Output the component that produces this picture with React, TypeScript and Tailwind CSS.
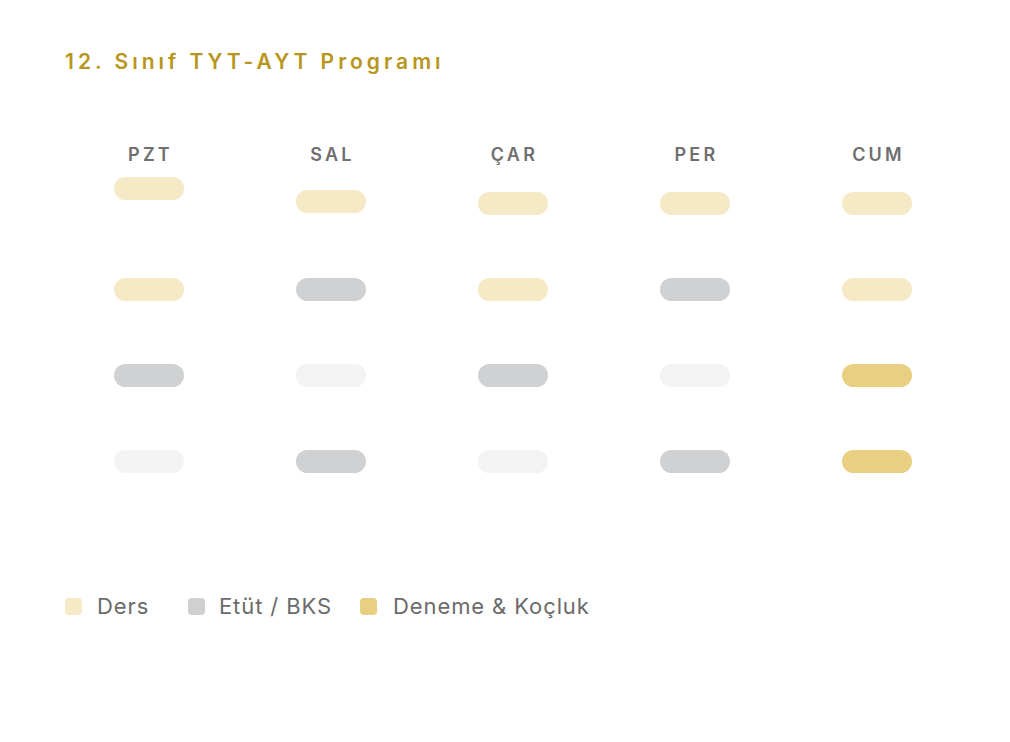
import React from "react";

type Kind = "c" | "g" | "l" | "y";

const pillClass: Record<Kind, string> = {
  c: "bg-[#f5e9c6]",
  g: "bg-[#cfd1d2]",
  l: "bg-[#f3f3f3]",
  y: "bg-[#e9cf82]",
};

const days: { name: string; first: string; pills: Kind[] }[] = [
  { name: "PZT", first: "mt-[7px]", pills: ["c", "c", "g", "l"] },
  { name: "SAL", first: "mt-[20px]", pills: ["c", "g", "l", "g"] },
  { name: "ÇAR", first: "mt-[22px]", pills: ["c", "c", "g", "l"] },
  { name: "PER", first: "mt-[22px]", pills: ["c", "g", "l", "g"] },
  { name: "CUM", first: "mt-[22px]", pills: ["c", "c", "y", "y"] },
];

export default function App() {
  return (
    <div
      className="w-[1010px] h-[742px] bg-white relative overflow-hidden"
      style={{ fontFamily: "Inter, 'Open Sans', sans-serif" }}
    >
      <div className="pt-[48px] pl-[65px]">
        <h1 className="text-[21px] leading-[28px] font-semibold tracking-[4px] text-[#b8961c]">
          12. Sınıf TYT-AYT Programı
        </h1>
      </div>
      <div className="mt-[67px] ml-[58px] grid grid-cols-[repeat(5,182px)]">
        {days.map((d) => (
          <div key={d.name} className="flex flex-col items-center">
            <div className="h-[27px] text-[18px] leading-[24px] font-semibold tracking-[3.2px] text-[#6f6f6f] pl-[3px]">
              {d.name}
            </div>
            {d.pills.map((k, i) => (
              <div key={i} className="h-[86px] flex flex-col items-center">
                <div
                  className={`w-[70px] h-[23px] rounded-full ${pillClass[k]} ${
                    i === 0 ? d.first : "mt-[22px]"
                  }`}
                />
              </div>
            ))}
          </div>
        ))}
      </div>
      <div className="absolute left-[65px] top-[592px] flex items-center text-[22px] leading-[28px] tracking-[0.9px] text-[#6b6b6b]">
        <div className="flex items-center w-[123px]">
          <span className="w-[17px] h-[17px] rounded-[4px] bg-[#f5e9c6]" />
          <span className="ml-[15px]">Ders</span>
        </div>
        <div className="flex items-center w-[172px]">
          <span className="w-[17px] h-[17px] rounded-[4px] bg-[#d0d0d0]" />
          <span className="ml-[14px]">Etüt / BKS</span>
        </div>
        <div className="flex items-center">
          <span className="w-[17px] h-[17px] rounded-[4px] bg-[#e9cf82]" />
          <span className="ml-[16px]">Deneme &amp; Koçluk</span>
        </div>
      </div>
    </div>
  );
}
